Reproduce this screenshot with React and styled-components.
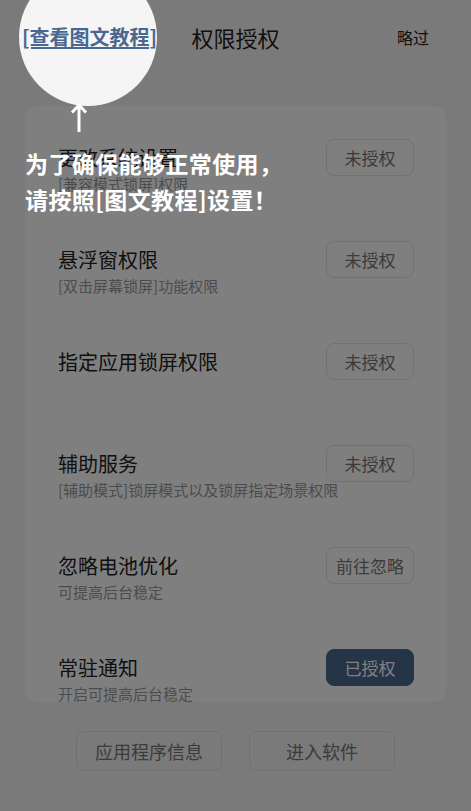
import React from "react";
import styled, { createGlobalStyle } from "styled-components";

const Global = createGlobalStyle`
  html, body { margin: 0; padding: 0; background: #f5f5f5; }
  body { font-family: "Noto Sans CJK SC", "Noto Sans", sans-serif; }
  * { box-sizing: border-box; }
`;

const Page = styled.div`
  position: relative;
  width: 471px;
  height: 811px;
  overflow: hidden;
  background: #f5f5f5;
`;

const Header = styled.header`
  display: grid;
  grid-template-columns: minmax(0, 1fr) auto minmax(0, 1fr);
  align-items: center;
  height: 74px;
  padding: 0 22px;
`;

const TutorialLink = styled.a`
  justify-self: start;
  font-size: 20px;
  font-weight: 700;
  color: #4a6791;
  text-decoration: underline;
  text-decoration-thickness: 2px;
  text-underline-offset: 2px;
  line-height: 1;
  white-space: nowrap;
`;

const Title = styled.h1`
  margin: 0;
  font-size: 22px;
  font-weight: 400;
  color: #1e1e1e;
  line-height: 1;
`;

const Skip = styled.span`
  justify-self: end;
  margin-right: 20px;
  font-size: 16px;
  color: #1e1e1e;
  line-height: 1;
`;

const Card = styled.section`
  margin: 32px 25px 0;
  height: 596px;
  padding: 33px 32px 0 33px;
  background: #ffffff;
  border-radius: 14px;
  overflow: hidden;
  display: flex;
  flex-direction: column;
  gap: 50px;
`;

const Row = styled.div`
  display: grid;
  grid-template-columns: minmax(0, 1fr) auto;
  align-items: start;
  flex-shrink: 0;
`;

const RowText = styled.div`
  display: flex;
  flex-direction: column;
  min-width: 0;
`;

const RowTitle = styled.div`
  height: 37px;
  display: flex;
  align-items: center;
  font-size: 20px;
  color: #222;
`;

const RowSub = styled.div`
  height: 15px;
  line-height: 15px;
  font-size: 15px;
  color: #999;
  white-space: nowrap;
`;

const StatusButton = styled.button`
  width: 88px;
  height: 37px;
  border-radius: 8px;
  border: 1px solid ${(p) => (p.$done ? "#4c6890" : "#e4e4e4")};
  background: ${(p) => (p.$done ? "#4c6890" : "transparent")};
  color: ${(p) => (p.$done ? "#ffffff" : "#777")};
  font-family: inherit;
  font-size: 17px;
  padding: 0;
`;

const Footer = styled.div`
  display: flex;
  justify-content: center;
  gap: 27px;
  margin-top: 29px;
`;

const FooterButton = styled.button`
  width: 146px;
  height: 40px;
  border-radius: 8px;
  border: 1px solid #e0e0e0;
  background: transparent;
  color: #777;
  font-family: inherit;
  font-size: 18px;
  padding: 0;
`;

const Spotlight = styled.div`
  position: absolute;
  left: 19px;
  top: -32px;
  width: 138px;
  height: 138px;
  border-radius: 50%;
  box-shadow: 0 0 0 1200px rgba(0, 0, 0, 0.5);
  pointer-events: none;
`;

const Guide = styled.div`
  position: absolute;
  left: 25px;
  top: 103px;
  display: flex;
  flex-direction: column;
  align-items: flex-start;
  pointer-events: none;
`;

const ArrowIcon = styled.svg`
  margin-left: 45px;
  display: block;
`;

const GuideText = styled.p`
  margin: 12px 0 0;
  font-size: 23px;
  font-weight: 700;
  line-height: 36px;
  color: #ffffff;
  white-space: nowrap;
  letter-spacing: 0.4px;
`;

const rows = [
  { title: "更改系统设置", sub: "[兼容模式锁屏]权限", label: "未授权" },
  { title: "悬浮窗权限", sub: "[双击屏幕锁屏]功能权限", label: "未授权" },
  { title: "指定应用锁屏权限", sub: "", label: "未授权" },
  { title: "辅助服务", sub: "[辅助模式]锁屏模式以及锁屏指定场景权限", label: "未授权" },
  { title: "忽略电池优化", sub: "可提高后台稳定", label: "前往忽略" },
  { title: "常驻通知", sub: "开启可提高后台稳定", label: "已授权", done: true },
];

export default function App() {
  return (
    <>
      <Global />
      <Page>
        <Header>
          <TutorialLink>[查看图文教程]</TutorialLink>
          <Title>权限授权</Title>
          <Skip>略过</Skip>
        </Header>
        <Card>
          {rows.map((r) => (
            <Row key={r.title}>
              <RowText>
                <RowTitle>{r.title}</RowTitle>
                <RowSub>{r.sub}</RowSub>
              </RowText>
              <StatusButton $done={r.done}>{r.label}</StatusButton>
            </Row>
          ))}
        </Card>
        <Footer>
          <FooterButton>应用程序信息</FooterButton>
          <FooterButton>进入软件</FooterButton>
        </Footer>
        <Spotlight />
        <Guide>
          <ArrowIcon width="18" height="30" viewBox="0 0 18 30">
            <path d="M9 29V2M2 9.5L9 2l7 7.5" fill="none" stroke="#fff" strokeWidth="3" strokeLinecap="butt" strokeLinejoin="miter" />
          </ArrowIcon>
          <GuideText>
            为了确保能够正常使用，
            <br />
            请按照[图文教程]设置！
          </GuideText>
        </Guide>
      </Page>
    </>
  );
}
